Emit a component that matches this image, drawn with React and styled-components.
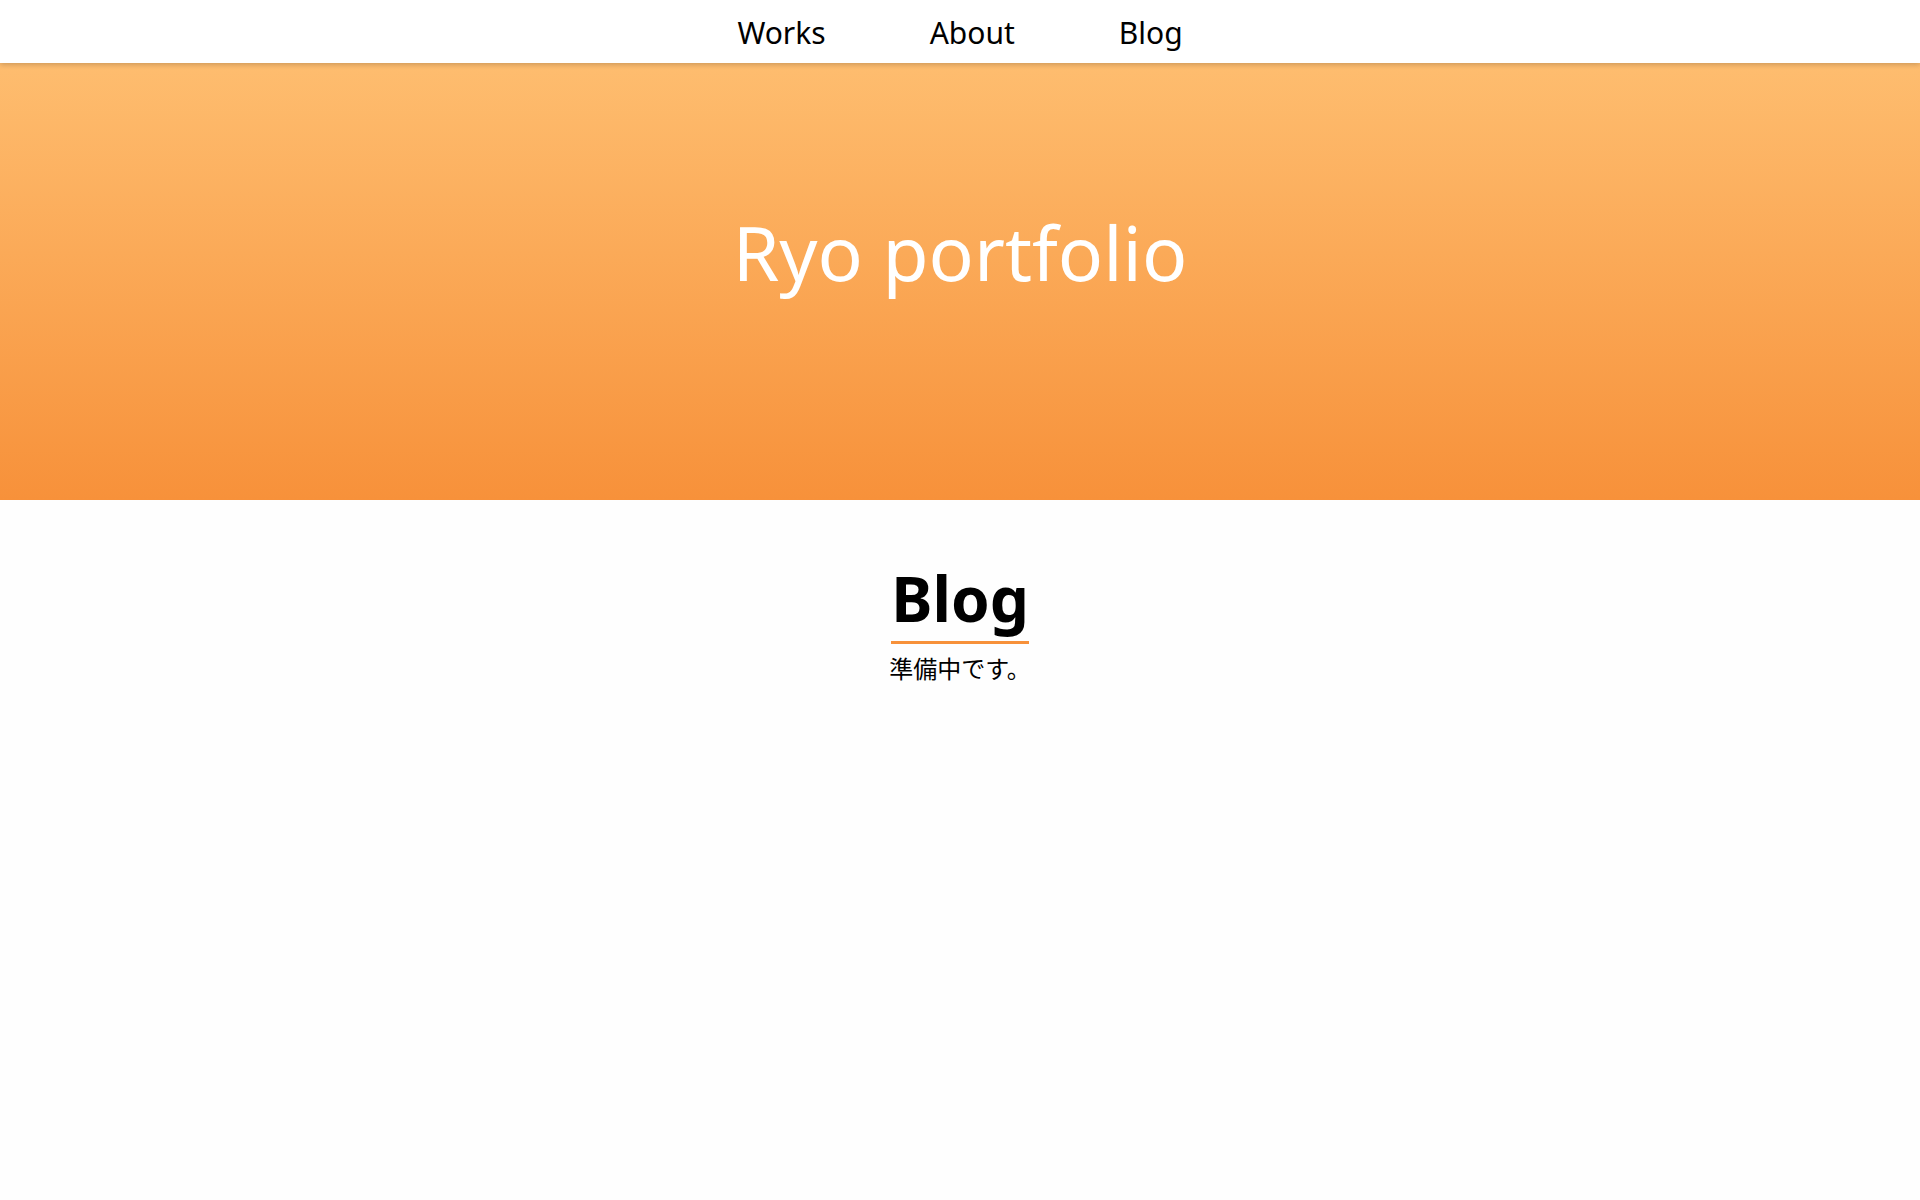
import React from "react";
import styled, { createGlobalStyle } from "styled-components";

const Global = createGlobalStyle`
  html, body { margin: 0; padding: 0; background: #fefefe; }
  body { font-family: "Noto Sans", "Noto Sans CJK JP", sans-serif; color: #000; }
  * { box-sizing: border-box; }
`;

const Header = styled.header`
  height: 63px;
  background: #fff;
  display: flex;
  justify-content: center;
  align-items: center;
  gap: 104px;
  position: relative;
  z-index: 1;
  box-shadow: 0 2px 5px rgba(0, 0, 0, 0.18);
`;

const NavLink = styled.a`
  font-size: 30px;
  line-height: 1;
  color: #000;
  text-decoration: none;
  padding-top: 2px;
`;

const Hero = styled.section`
  height: 437px;
  background: linear-gradient(to bottom, #febd6f 0%, #f7913a 100%);
  display: flex;
  justify-content: center;
  padding-top: 152px;
`;

const Title = styled.h1`
  margin: 0;
  font-size: 75px;
  font-weight: 400;
  line-height: 1;
  color: #fff;
`;

const Main = styled.main`
  display: flex;
  flex-direction: column;
  align-items: center;
  padding-top: 64px;
`;

const Heading = styled.h2`
  margin: 0;
  font-size: 62px;
  font-weight: 700;
  line-height: 1.1;
  padding-bottom: 9px;
  border-bottom: 3px solid #f7913a;
`;

const Text = styled.p`
  margin: 8px 0 0;
  font-size: 24px;
  font-family: "Noto Sans CJK JP", sans-serif;
  line-height: 1.3;
`;

export default function App() {
  return (
    <>
      <Global />
      <Header>
        <NavLink href="#works">Works</NavLink>
        <NavLink href="#about">About</NavLink>
        <NavLink href="#blog">Blog</NavLink>
      </Header>
      <Hero>
        <Title>Ryo portfolio</Title>
      </Hero>
      <Main>
        <Heading>Blog</Heading>
        <Text>準備中です。</Text>
      </Main>
    </>
  );
}
